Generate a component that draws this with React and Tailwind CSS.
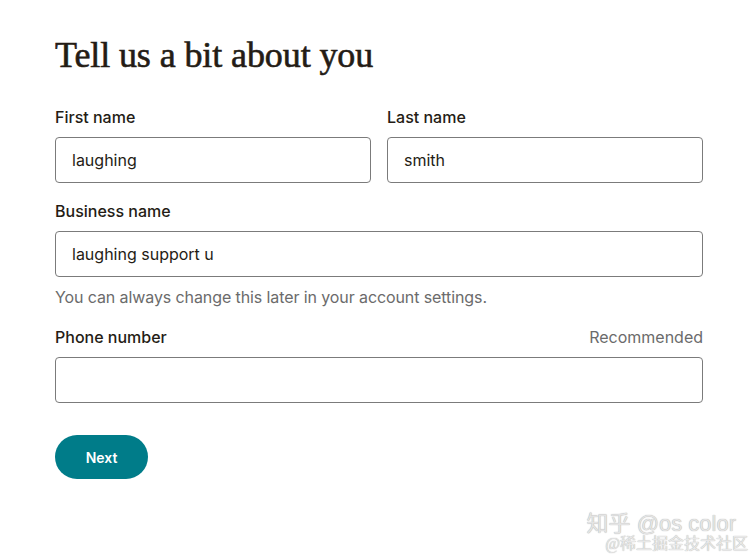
import React from 'react';

const sans = { fontFamily: 'Inter, "Liberation Sans", sans-serif' };

// --- Labeled text input ---
const Field = ({ label, value = '', hint, className = '' }) => (
    <div className={`flex flex-col ${className}`}>
        <div className="flex items-center justify-between h-6">
            <span className="text-[16px] font-medium text-[#241c15]">{label}</span>
            {hint && <span className="text-[16px] text-[#6b6b6b]">{hint}</span>}
        </div>
        <div className="mt-2 h-[46px] border border-[#7b7b7b] rounded-[4px] flex items-center px-4 text-[16px] text-[#241c15]">
            {value}
        </div>
    </div>
);

const App = () => {
    return (
        <div className="relative w-[754px] h-[558px] bg-white overflow-hidden" style={sans}>
            <div className="pl-[55px] pr-[51px] pt-[35px]">
                <h1
                    className="text-[36px] leading-[40px] text-[#241c15] tracking-[-0.1px] [-webkit-text-stroke:0.6px_#241c15]"
                    style={{ fontFamily: '"Liberation Serif", serif' }}
                >
                    Tell us a bit about you
                </h1>

                <div className="mt-[30px] grid grid-cols-2 gap-4">
                    <Field label="First name" value="laughing" />
                    <Field label="Last name" value="smith" />
                </div>

                <Field label="Business name" value="laughing support u" className="mt-4" />
                <p className="mt-2 text-[16px] leading-6 text-[#6b6b6b] tracking-[-0.1px]">
                    You can always change this later in your account settings.
                </p>

                <Field label="Phone number" hint="Recommended" className="mt-4" />

                <button className="mt-8 w-[93px] h-[44px] rounded-full bg-[#007c89] text-white text-[14px] font-semibold">
                    Next
                </button>
            </div>

            {/* watermark */}
            <div
                className="absolute right-[18px] top-[513px] text-[22px] leading-[22px] text-[#e4e4e4]"
                style={{ fontFamily: '"Liberation Sans", "Noto Sans CJK SC", sans-serif', textShadow: '0 0 1px #9a9a9a' }}
            >
                知乎 @os color
            </div>
            <div
                className="absolute right-[6px] top-[535px] text-[16px] leading-[18px] text-[#e8e8e8]"
                style={{ fontFamily: '"Liberation Serif", "Noto Sans CJK SC", serif', textShadow: '0 0 1px #9a9a9a' }}
            >
                @稀土掘金技术社区
            </div>
        </div>
    );
};

export default App;
